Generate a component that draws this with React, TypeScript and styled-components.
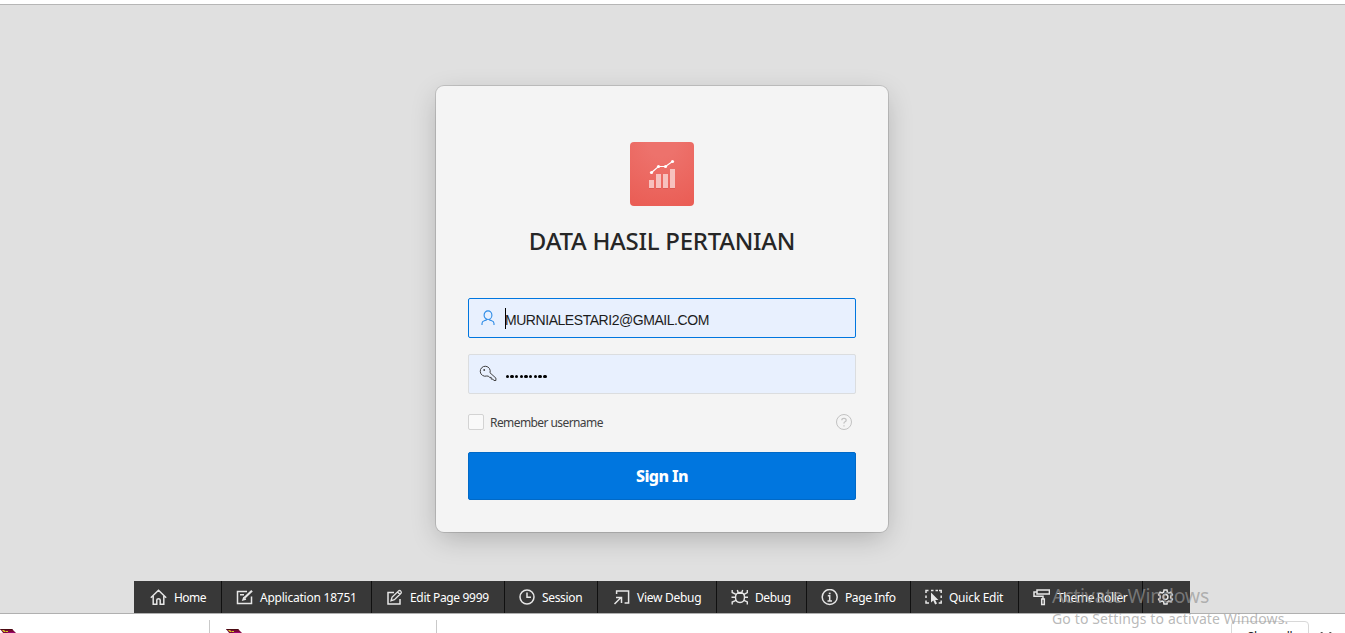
import React from 'react';
import styled, { createGlobalStyle } from 'styled-components';

const Global = createGlobalStyle`
  * { box-sizing: border-box; }
  body { margin: 0; overflow: hidden; background: #fff; font-family: "Noto Sans", "Open Sans", sans-serif; }
`;

const Screen = styled.div`
  position: relative;
  width: 1345px;
  height: 633px;
  overflow: hidden;
  display: flex;
  flex-direction: column;
  padding-top: 4px;
  background: #fff;
`;

const Page = styled.main`
  height: 610px;
  flex: none;
  display: flex;
  flex-direction: column;
  background: #e0e0e0;
  border-top: 1px solid #b6b6b6;
  border-bottom: 1px solid #b0b0b0;
`;

const Card = styled.form`
  width: 454px;
  height: 448px;
  margin: 80px 0 0 435px;
  padding: 56px 32px 32px;
  display: flex;
  flex-direction: column;
  background: #f4f4f4;
  background-clip: padding-box;
  border: 1px solid rgba(0, 0, 0, 0.13);
  border-radius: 9px;
  box-shadow: 0 8px 28px -4px rgba(0, 0, 0, 0.23);
`;

const Logo = styled.div`
  width: 64px;
  height: 64px;
  flex: none;
  align-self: center;
  border-radius: 4px;
  background: radial-gradient(circle at 50% 0%, #ed726c 20%, #e9584f 115%);
  svg { display: block; }
`;

const Title = styled.h1`
  margin: 19px 0 0;
  height: 32px;
  flex: none;
  line-height: 32px;
  text-align: center;
  white-space: nowrap;
  font-size: 24px;
  font-weight: 500;
  letter-spacing: -0.26px;
  color: #262626;
`;

const Field = styled.div<{ $active?: boolean; $top: number }>`
  height: 40px;
  flex: none;
  margin-top: ${p => p.$top}px;
  padding-left: 10px;
  display: flex;
  align-items: center;
  background: #e8f0fe;
  border: 1px solid ${p => (p.$active ? '#0076df' : '#dbdddf')};
  border-radius: 2px;
  color: ${p => (p.$active ? '#2b8ae6' : '#404040')};
`;

const Caret = styled.i`
  width: 1px;
  height: 21px;
  margin-left: 8px;
  background: #000;
`;

const Value = styled.span`
  padding-top: 3px;
  margin-left: -1px;
  font: 14px/20px "Liberation Sans", Arial, sans-serif;
  letter-spacing: -0.45px;
  color: #1c1c1c;
`;

const Dots = styled.span`
  display: flex;
  gap: 1.2px;
  margin: 5px 0 0 8.5px;
  i { width: 3.5px; height: 3.5px; border-radius: 50%; background: #000; }
`;

const Options = styled.div`
  height: 16px;
  flex: none;
  margin-top: 20px;
  padding-right: 4px;
  display: flex;
  align-items: center;
  svg { margin-left: auto; }
`;

const Checkbox = styled.span`
  width: 16px;
  height: 16px;
  margin-right: 6px;
  border: 1px solid #d3d3d3;
  border-radius: 2px;
  background: #f9f9f9;
`;

const OptionLabel = styled.label`
  font-size: 12px;
  line-height: 16px;
  letter-spacing: -0.58px;
  padding-top: 1px;
  color: #404040;
`;

const SignIn = styled.button`
  height: 48px;
  flex: none;
  margin-top: 22px;
  padding: 0;
  border: 1px solid #0069c7;
  border-radius: 2px;
  background: #0076df;
  color: #fff;
  font: 800 16px/20px "Noto Sans", sans-serif;
  letter-spacing: -0.6px;
`;

const Toolbar = styled.nav`
  width: 1056px;
  height: 32px;
  flex: none;
  margin: auto 0 0 134px;
  display: flex;
  background: #383838;
`;

const Tool = styled.div<{ $w: number; $pad: number }>`
  width: ${p => p.$w}px;
  padding-left: ${p => p.$pad}px;
  display: flex;
  flex: none;
  align-items: center;
  color: #e6e6e6;
  border-right: 1px solid #101010;
  &:last-child { border-right: 0; }
  svg { flex: none; }
`;

const ToolLabel = styled.span<{ $ls: number }>`
  margin-left: 7px;
  padding-top: 1px;
  font-size: 12px;
  line-height: 16px;
  white-space: nowrap;
  letter-spacing: ${p => p.$ls}px;
  color: #fff;
`;

const Downloads = styled.footer`
  height: 19px;
  display: flex;
  overflow: hidden;
`;

const Download = styled.div<{ $w: number; $pad: number }>`
  width: ${p => p.$w}px;
  height: 13px;
  margin-top: 6px;
  padding: 9px 0 0 ${p => p.$pad}px;
  border-right: 1px solid #c9c9c9;
  overflow: hidden;
  svg { display: block; }
`;

const ShowAll = styled.div`
  width: 78px;
  height: 28px;
  flex: none;
  margin: 7px 11px 0 auto;
  border: 1px solid #d8d8d8;
  border-radius: 4px;
  text-align: center;
  font-size: 12px;
  line-height: 29px;
  letter-spacing: -0.2px;
  color: #222;
`;

const Close = styled.div`
  width: 25px;
  padding-top: 18px;
  svg { display: block; }
`;

const Watermark = styled.div`
  position: absolute;
  left: 1052px;
  top: 583px;
  white-space: nowrap;
  color: rgba(150, 150, 150, 0.68);
  pointer-events: none;
`;

const WatermarkTitle = styled.div`
  font-size: 19.5px;
  line-height: 26px;
  letter-spacing: -0.26px;
`;

const WatermarkText = styled.div`
  font-size: 14px;
  line-height: 20px;
  letter-spacing: 0.13px;
`;

const Icon = ({ children, w = 17 }: { children: React.ReactNode; w?: number }) => (
  <svg width={w} height="17" viewBox={`0 0 ${w} 17`} fill="none" stroke="currentColor" strokeWidth="1.5">
    {children}
  </svg>
);

const RarIcon = () => (
  <svg width="16" height="5" viewBox="0 0 16 5">
    <path d="M0 0H12L16 4V5H4Z" fill="#7a0836" />
    <path d="M0 0H12L13 1H1Z" fill="#4b0b12" />
    <path d="M2 1h2l2 2h-2zM6 2h2v1H6z" fill="#d8cf22" />
    <path d="M7 3h7l1 1H8z" fill="#9c0672" />
  </svg>
);

const tools = [
  { label: 'Home', w: 88, pad: 16, ls: -0.55, icon: <path d="M.8 8.7 8.5 1.3l7.7 7.4M3.2 7v8.3h3.6V11q0-1.3 1.7-1.3t1.7 1.3v4.3h3.6V7" /> },
  { label: 'Application 18751', w: 150, pad: 14, ls: -0.23, icon: <><path d="M11 2.5H1.5v12h14V7.5M4 5.8h4" /><path d="m8 9.3 8-7.6" strokeWidth="2.2" /><path d="m8 8.3-1 2.5 3-.8" /></> },
  { label: 'Edit Page 9999', w: 133, pad: 14, ls: -0.33, icon: <><path d="M8 3.5H2v11.5h12V10" /><path d="m6 8.3 6.6-6.4q1.2-.8 2.2.2t.2 2.2l-6.6 6.4-3.4 1zM11.5 3l2.5 2.5" strokeWidth="1.3" /></> },
  { label: 'Session', w: 93, pad: 13, ls: -0.33, icon: <><circle cx="9" cy="8" r="7" /><path d="M9 3.5V8.2h4" /></> },
  { label: 'View Debug', w: 119, pad: 15, ls: -0.28, icon: <path d="M3.6 5V2h12v12h-4M1.5 15l6.5-6.5M3 8.5h5.5V14" /> },
  { label: 'Debug', w: 90, pad: 14, ls: -0.4, icon: <path d="M9 3.5c-3 0-4.5 2-4.5 4.8S6 13.5 9 13.5s4.5-2.4 4.5-5.2S12 3.5 9 3.5ZM6 4.2h6M1.2 1v2.5L5 5.3M16.3 1v2.5L13 5.3M.5 8.3h4m9 0H17M1.2 15.5V13L5 11.3M16.3 15.5V13L13 11.3M6.3 1l.9 2.5m4.5-2.5-.9 2.5" strokeWidth="1.4" /> },
  { label: 'Page Info', w: 104, pad: 14, ls: -0.4, icon: <><circle cx="8.7" cy="8" r="7.5" /><path d="M6.8 6.8h1.9v5M6.5 12h4.5" /><path d="M8.7 3.7v1.6" strokeWidth="1.8" /></> },
  { label: 'Quick Edit', w: 108, pad: 14, ls: -0.25, icon: <><path d="M1 4V1.5h2.5M6 1.5h2.5m2 0H13M14 1.5h2.2V4M1 6.5V9m0 2.5V14h3M16.2 6.5V9m0 2.5V14h-2.5" /><path d="M6 3.5v10l2.3-2 1.8 4 1.9-.9-1.8-3.7h3.2Z" fill="currentColor" stroke="none" /></> },
  { label: 'Theme Roller', w: 124, pad: 14, ls: -0.35, icon: <><path d="M4 1h12.4v4H4zM4 3H1v4.3h9V10" /><path d="M8.7 10h2.6v5.5H8.7z" /></> },
];

const bars: [number, number, number][] = [[19, 38, 8], [26, 32, 14], [33, 32, 14], [40, 27, 19]];

export default function App() {
  return (
    <>
      <Global />
      <Screen>
        <Page>
          <Card>
            <Logo>
              <svg width="64" height="64" viewBox="0 0 64 64">
                {bars.map(([x, y, h]) => (
                  <g key={x}>
                    <rect x={x} y={y + 1} width="5" height={h} fill="#c84840" opacity=".4" />
                    <rect x={x} y={y} width="5" height={h} fill="#f7c1be" />
                  </g>
                ))}
                <path d="m21.5 30.5 7-6h7l7-5" fill="none" stroke="#fff" strokeWidth="1.2" />
                <g fill="#fff">
                  <circle cx="21.5" cy="30.5" r="1.6" />
                  <circle cx="28.5" cy="24.5" r="1.6" />
                  <circle cx="35.5" cy="24.5" r="1.6" />
                  <circle cx="42.5" cy="19.5" r="1.6" />
                </g>
              </svg>
            </Logo>
            <Title>DATA HASIL PERTANIAN</Title>
            <Field $active $top={41}>
              <svg width="18" height="18" viewBox="0 0 18 18" fill="none" stroke="currentColor" strokeWidth="1.1">
                <ellipse cx="9" cy="6.2" rx="3.9" ry="4.3" />
                <path d="M3 16v-1.5q0-2.2 2.2-2.8L7.3 11v-1M15 16v-1.5q0-2.2-2.2-2.8L10.7 11v-1" />
              </svg>
              <Caret />
              <Value>MURNIALESTARI2@GMAIL.COM</Value>
            </Field>
            <Field $top={16}>
              <svg width="18" height="18" viewBox="0 0 18 18" fill="none" stroke="currentColor" strokeWidth="1">
                <path d="M11 7.8A5 5 0 1 0 7.8 11l1.7.2 1 1.2h1.7v1.7h1.7l1 1.4h2v-2.4Z" />
                <circle cx="5.2" cy="5" r=".9" fill="currentColor" stroke="none" />
              </svg>
              <Dots>{Array.from({ length: 9 }, (_, i) => <i key={i} />)}</Dots>
            </Field>
            <Options>
              <Checkbox />
              <OptionLabel>Remember username</OptionLabel>
              <svg width="16" height="16" viewBox="0 0 16 16" fill="none" stroke="#c2c2c2">
                <circle cx="8" cy="8" r="7.5" />
                <path d="M5.8 6.3q0-2 2.2-2t2.2 1.9q0 1-1.2 1.6T8 9.7M8 11.2v1.3" strokeWidth="1.2" />
              </svg>
            </Options>
            <SignIn type="button">Sign In</SignIn>
          </Card>
          <Toolbar>
            {tools.map(t => (
              <Tool key={t.label} $w={t.w} $pad={t.pad}>
                <Icon>{t.icon}</Icon>
                <ToolLabel $ls={t.ls}>{t.label}</ToolLabel>
              </Tool>
            ))}
            <Tool $w={47} $pad={14}>
              <Icon>
                <path d="m7 1h3l.4 2.2 1.4.8 2.1-.8 1.5 2.6-1.7 1.4v1.6l1.7 1.4-1.5 2.6-2.1-.8-1.4.8L10 15H7l-.4-2.2-1.4-.8-2.1.8-1.5-2.6 1.7-1.4V7.2L1.6 5.8l1.5-2.6 2.1.8 1.4-.8Z" />
                <circle cx="8.5" cy="8" r="2.4" />
              </Icon>
            </Tool>
          </Toolbar>
        </Page>
        <Downloads>
          <Download $w={210} $pad={0}><RarIcon /></Download>
          <Download $w={227} $pad={16}><RarIcon /></Download>
          <ShowAll>Show all</ShowAll>
          <Close>
            <svg width="12" height="12" viewBox="0 0 12 12" stroke="#555" strokeWidth="1.6"><path d="m1 0 10 10M11 0 1 10" /></svg>
          </Close>
        </Downloads>
        <Watermark>
          <WatermarkTitle>Activate Windows</WatermarkTitle>
          <WatermarkText>Go to Settings to activate Windows.</WatermarkText>
        </Watermark>
      </Screen>
    </>
  );
}
